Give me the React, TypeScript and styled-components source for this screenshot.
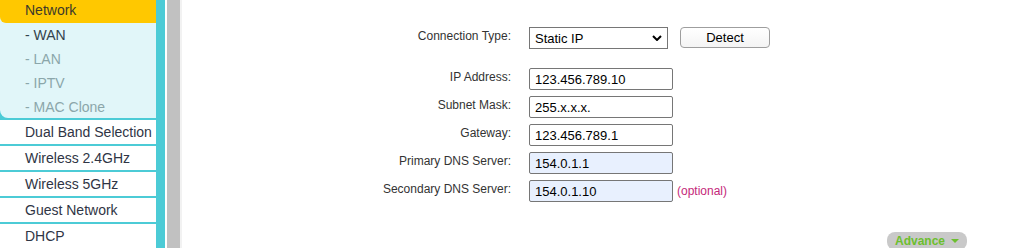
import styled, { createGlobalStyle } from "styled-components"

const GlobalStyle = createGlobalStyle`
  body {
    margin: 0;
    background: #ffffff;
    font-family: "Liberation Sans", Arial, sans-serif;
  }
`

const subItems = [
  { label: "- WAN", active: true },
  { label: "- LAN", active: false },
  { label: "- IPTV", active: false },
  { label: "- MAC Clone", active: false },
]

const menuItems = ["Dual Band Selection", "Wireless 2.4GHz", "Wireless 5GHz", "Guest Network", "DHCP"]

const fields = [
  { label: "IP Address:", value: "123.456.789.10", filled: false },
  { label: "Subnet Mask:", value: "255.x.x.x.", filled: false },
  { label: "Gateway:", value: "123.456.789.1", filled: false },
  { label: "Primary DNS Server:", value: "154.0.1.1", filled: true },
  { label: "Secondary DNS Server:", value: "154.0.1.10", filled: true, note: "(optional)" },
]

const App = () => {
  return (
    <Page>
      <GlobalStyle />
      <Sidebar>
        <Group>
          <GroupHead>Network</GroupHead>
          {subItems.map(({ label, active }) => (
            <SubItem key={label} $active={active}>{label}</SubItem>
          ))}
        </Group>
        {menuItems.map((item) => (
          <MenuItem key={item}>{item}</MenuItem>
        ))}
      </Sidebar>

      <Scrollbar>
        <Thumb />
      </Scrollbar>

      <Main>
        <Form>
          <Label>Connection Type:</Label>
          <Controls>
            <SelectWrap>
              <Select defaultValue="static">
                <option value="static">Static IP</option>
                <option value="dynamic">Dynamic IP</option>
                <option value="pppoe">PPPoE</option>
              </Select>
              <Chevron viewBox="0 0 10 6" width="10" height="6">
                <path d="M1 1l4 4 4-4" fill="none" stroke="#000" strokeWidth="2" />
              </Chevron>
            </SelectWrap>
            <DetectButton>Detect</DetectButton>
          </Controls>

          <Spacer />

          {fields.map(({ label, value, filled, note }) => (
            <Row key={label}>
              <Label>{label}</Label>
              <Controls>
                <Input defaultValue={value} $filled={filled} />
                {note && <Note>{note}</Note>}
              </Controls>
            </Row>
          ))}
        </Form>

        <Footer>
          <AdvanceButton>
            Advance
            <svg viewBox="0 0 8 4" width="8" height="4">
              <path d="M0 0h8L4 4z" fill="#6cbf2e" />
            </svg>
          </AdvanceButton>
        </Footer>
      </Main>
    </Page>
  )
}

const Page = styled.div`
  display: flex;
  height: 248px;
  overflow: hidden;
`

const Sidebar = styled.div`
  width: 156px;
  padding-right: 9px;
  background: #4ccbd6;
  display: flex;
  flex-direction: column;
  gap: 2px;
  font-size: 14px;
  flex-shrink: 0;
`

const Group = styled.div`
  background: #e1f6f9;
  border-bottom-left-radius: 8px;
  height: 119px;
  overflow: hidden;
`

const GroupHead = styled.div`
  height: 23px;
  line-height: 21px;
  padding-left: 25px;
  background: #ffc800;
  color: #3d3a2a;
  border-bottom-left-radius: 6px;
`

const SubItem = styled.div<{ $active: boolean }>`
  height: 24px;
  line-height: 24px;
  padding-left: 25px;
  color: ${(p) => (p.$active ? "#33434c" : "#8ba6aa")};
`

const MenuItem = styled.div`
  height: 24px;
  line-height: 24px;
  padding-left: 25px;
  background: #ffffff;
  color: #2f3545;
  white-space: nowrap;
`

const Scrollbar = styled.div`
  width: 17px;
  padding-left: 2px;
  padding-right: 2px;
  box-sizing: border-box;
  background: linear-gradient(to right, #ffffff 0 2px, #f2f2f2 15px);
  flex-shrink: 0;
`

const Thumb = styled.div`
  width: 13px;
  height: 100%;
  background: #c1c1c1;
`

const Main = styled.div`
  flex: 1;
  display: flex;
  flex-direction: column;
  padding-top: 27px;
`

const Form = styled.div`
  display: grid;
  grid-template-columns: 200px auto;
  column-gap: 18px;
  row-gap: 6px;
  padding-left: 129px;
  align-items: start;
`

const Row = styled.div`
  display: contents;
`

const Spacer = styled.div`
  grid-column: 1 / -1;
  height: 7px;
`

const Label = styled.div`
  text-align: right;
  font-size: 12px;
  color: #333333;
  padding-top: 2px;
`

const Controls = styled.div`
  display: flex;
  align-items: center;
  gap: 12px;
`

const SelectWrap = styled.div`
  position: relative;
  width: 139px;
  height: 22px;
`

const Select = styled.select`
  appearance: none;
  width: 100%;
  height: 100%;
  border: 1px solid #767676;
  border-radius: 0;
  background: #ffffff;
  font-family: "Liberation Sans", Arial, sans-serif;
  font-size: 13px;
  color: #000000;
  padding: 0 0 0 5px;
  margin: 0;
`

const Chevron = styled.svg`
  position: absolute;
  right: 6px;
  top: 8px;
  pointer-events: none;
`

const DetectButton = styled.button`
  width: 90px;
  height: 21px;
  margin-top: -2px;
  border: 1px solid #9e9e9e;
  border-radius: 4px;
  background: linear-gradient(#ffffff, #f4f4f4);
  font-family: "Liberation Sans", Arial, sans-serif;
  font-size: 13px;
  color: #000000;
  padding: 0;
`

const Input = styled.input<{ $filled: boolean }>`
  width: 144px;
  height: 22px;
  box-sizing: border-box;
  border: 1px solid #767676;
  border-radius: 2px;
  background: ${(p) => (p.$filled ? "#e8f0fe" : "#ffffff")};
  font-family: "Liberation Sans", Arial, sans-serif;
  font-size: 13px;
  color: #000000;
  padding: 0 0 0 5px;
  margin: 0;
`

const Note = styled.span`
  font-size: 12px;
  color: #c4277a;
  margin-left: -8px;
`

const Footer = styled.div`
  display: flex;
  justify-content: flex-end;
  padding-right: 57px;
  margin-top: 30px;
`

const AdvanceButton = styled.div`
  display: flex;
  align-items: center;
  gap: 6px;
  justify-content: center;
  width: 80px;
  height: 18px;
  border-radius: 8px;
  background: #c9c9c9;
  color: #6cbf2e;
  font-size: 12px;
  font-weight: bold;
`

export default App
